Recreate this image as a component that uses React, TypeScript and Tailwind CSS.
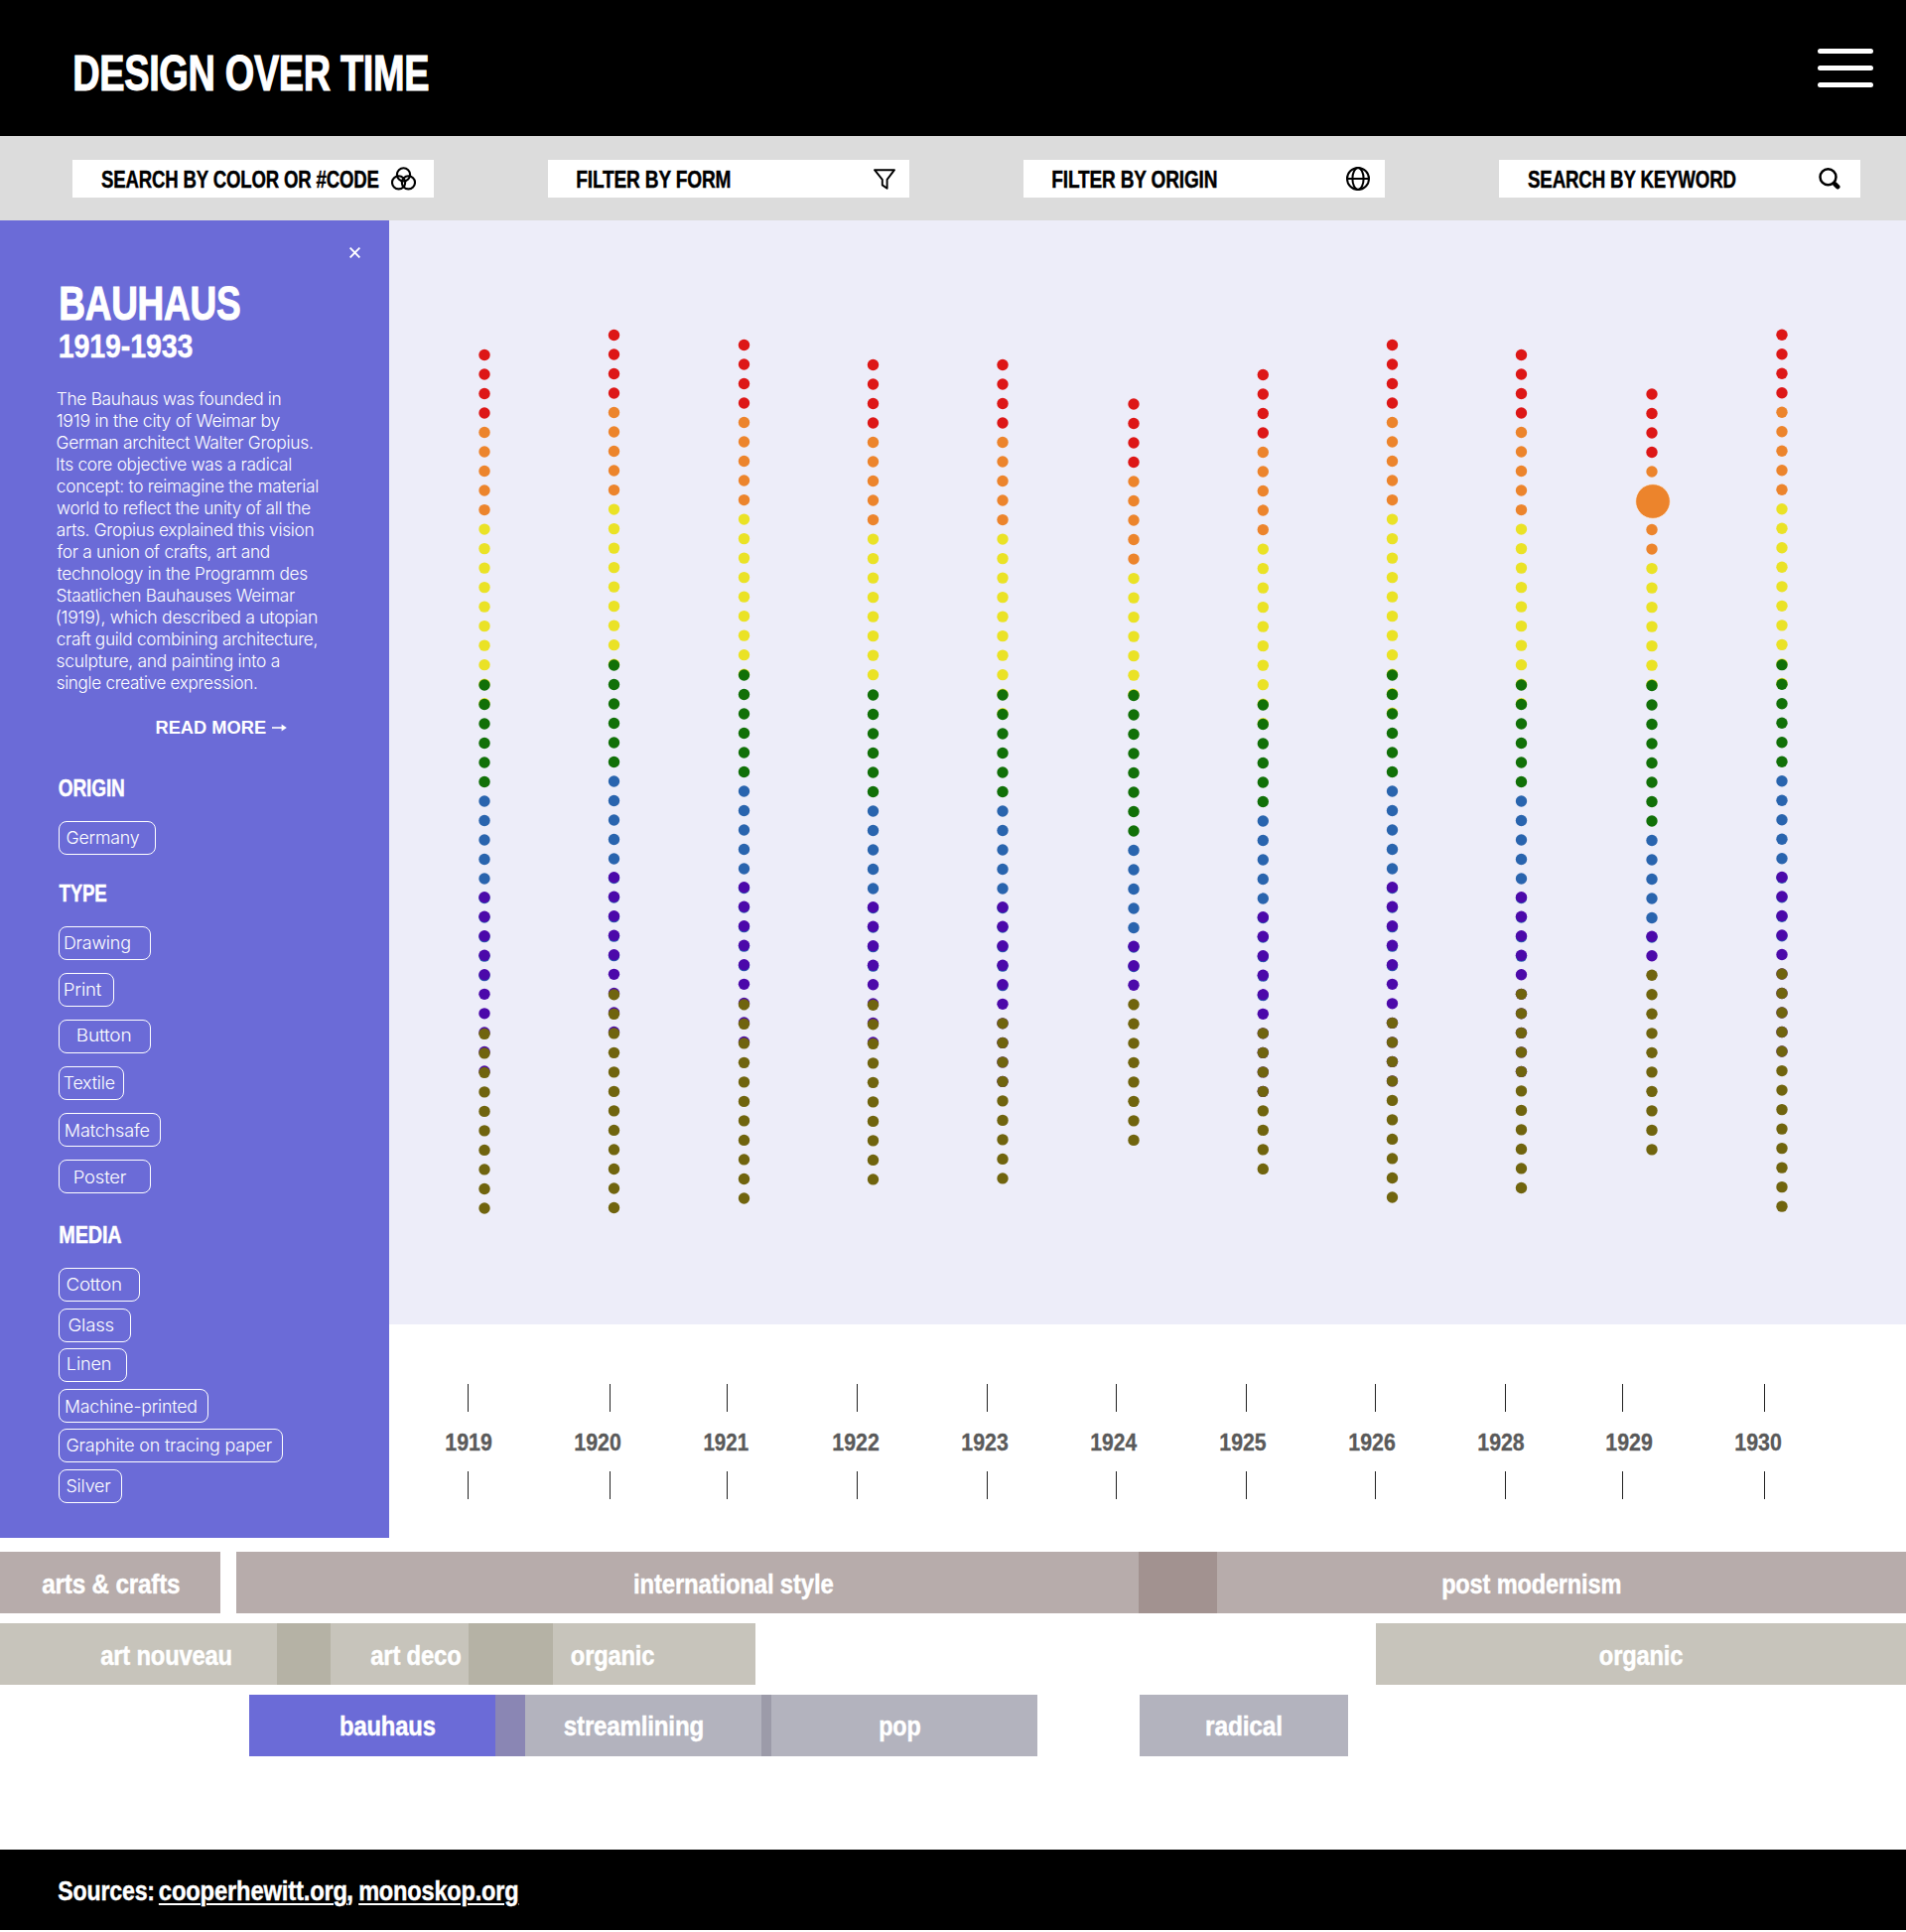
import { useLayoutEffect, useRef, useState } from "react";
import type { ReactNode } from "react";

/** Text condensed horizontally so that its glyphs span exactly `w` pixels. */
function Fit({ w, ml = 0, className = "", children }: { w: number; ml?: number; className?: string; children: string }) {
  const ref = useRef<HTMLSpanElement>(null);
  const [t, setT] = useState("none");
  useLayoutEffect(() => {
    const el = ref.current;
    const ctx = document.createElement("canvas").getContext("2d");
    if (!el || !ctx) return;
    const cs = getComputedStyle(el);
    // Measured at ten times the size, since canvas bounds are rounded to whole pixels.
    ctx.font = `${cs.fontWeight} ${parseFloat(cs.fontSize) * 10}px ${cs.fontFamily}`;
    const track = parseFloat(cs.letterSpacing) || 0;
    const m = ctx.measureText(children);
    const left = m.actualBoundingBoxLeft / 10;
    const ink = m.actualBoundingBoxRight / 10 + left + track * (children.length - 1);
    const s = w / ink;
    setT(`translateX(${left * s + 0.6}px) scaleX(${s})`);
  }, [w, children]);
  return (
    <span className="block shrink-0 whitespace-nowrap" style={{ width: w, marginLeft: ml }}>
      <span ref={ref} className={"inline-block origin-left " + className} style={{ transform: t }}>
        {children}
      </span>
    </span>
  );
}

const VennIcon = () => (
  <svg width="25" height="24" viewBox="0 0 25 24" fill="none" stroke="#000" strokeWidth="2.1">
    <circle cx="12.5" cy="7.8" r="6.6" />
    <circle cx="7.6" cy="15.8" r="6.6" />
    <circle cx="17.4" cy="15.8" r="6.6" />
  </svg>
);
const FunnelIcon = () => (
  <svg width="22" height="21" viewBox="0 0 22 21" fill="none" stroke="#000" strokeWidth="1.9" strokeLinejoin="round">
    <path d="M1 1.2h20l-7.4 9.6v9L8.8 16.4v-5.6z" />
  </svg>
);
const GlobeIcon = () => (
  <svg width="24" height="24" viewBox="0 0 24 24" fill="none" stroke="#000" strokeWidth="2">
    <circle cx="12" cy="12" r="11" />
    <ellipse cx="12" cy="12" rx="5.6" ry="11" />
    <path d="M1 12h22" />
  </svg>
);
const SearchIcon = () => (
  <svg width="22" height="22" viewBox="0 0 22 22" fill="none" stroke="#000">
    <circle cx="9.5" cy="9.3" r="8" strokeWidth="2.5" />
    <path d="M14.8 14.4l1.6 1.6" strokeWidth="3" />
    <path d="M16.4 16.4l2.8 2.8" strokeWidth="4.6" strokeLinecap="round" />
  </svg>
);

const filters: { label: string; w: number; icon: ReactNode; pr: string }[] = [
  { label: "SEARCH BY COLOR OR #CODE", w: 279, icon: <VennIcon />, pr: "pr-[18px]" },
  { label: "FILTER BY FORM", w: 154, icon: <FunnelIcon />, pr: "pr-[14px]" },
  { label: "FILTER BY ORIGIN", w: 165, icon: <GlobeIcon />, pr: "pr-[15px]" },
  { label: "SEARCH BY KEYWORD", w: 209, icon: <SearchIcon />, pr: "pr-[20px]" },
];

const paragraph: [string, number][] = [
  ["The Bauhaus was founded in", 225],
  ["1919 in the city of Weimar by", 224.5],
  ["German architect Walter Gropius.", 257],
  ["Its core objective was a radical", 235.5],
  ["concept: to reimagine the material", 262.5],
  ["world to reflect the unity of all the", 255],
  ["arts. Gropius explained this vision", 258],
  ["for a union of crafts, art and", 213.5],
  ["technology in the Programm des", 252],
  ["Staatlichen Bauhauses Weimar", 239.5],
  ["(1919), which described a utopian", 261.5],
  ["craft guild combining architecture,", 261.5],
  ["sculpture, and painting into a", 223.5],
  ["single creative expression.", 201],
];

type Tag = { label: string; box: number; x: number; w: number; pt: number; mt: number };
const origin: Tag[] = [{ label: "Germany", box: 98, x: 8.3, w: 72.5, pt: 6, mt: 0 }];
const types: Tag[] = [
  { label: "Drawing", box: 93, x: 5.5, w: 65, pt: 6, mt: 0 },
  { label: "Print", box: 56, x: 5.5, w: 36.5, pt: 6, mt: 13 },
  { label: "Button", box: 93, x: 18.5, w: 52.5, pt: 5, mt: 13 },
  { label: "Textile", box: 66, x: 5, w: 50.5, pt: 6, mt: 13 },
  { label: "Matchsafe", box: 103, x: 6.7, w: 83.5, pt: 7, mt: 13 },
  { label: "Poster", box: 93, x: 15.7, w: 51.5, pt: 7, mt: 13 },
];
const media: Tag[] = [
  { label: "Cotton", box: 82, x: 8.3, w: 54, pt: 6, mt: 0 },
  { label: "Glass", box: 73, x: 10.3, w: 44.7, pt: 6, mt: 7 },
  { label: "Linen", box: 69, x: 8.7, w: 42.3, pt: 5, mt: 6 },
  { label: "Machine-printed", box: 151, x: 6.7, w: 131, pt: 7, mt: 7 },
  { label: "Graphite on tracing paper", box: 226, x: 8.3, w: 206.3, pt: 6, mt: 6 },
  { label: "Silver", box: 64, x: 8.3, w: 43.7, pt: 6, mt: 7 },
];

function Tags({ items }: { items: Tag[] }) {
  return (
    <div className="flex flex-col font-['Inter',sans-serif] font-[360] tracking-[-0.2px]">
      {items.map((t) => (
        <div
          key={t.label}
          className="h-[34px] rounded-[8px] border border-white text-[17.8px] leading-[20px] text-white"
          style={{ width: t.box, marginTop: t.mt, paddingTop: t.pt }}
        >
          <Fit w={t.w} ml={t.x - 1}>{t.label}</Fit>
        </div>
      ))}
    </div>
  );
}

const RED = "#dd1717", ORANGE = "#ec842c", YELLOW = "#eae226", GREEN = "#117008";
const BLUE = "#2964ae", PURPLE = "#4c09aa", OLIVE = "#70640e";
const PALETTE = [RED, ORANGE, YELLOW, GREEN, BLUE, PURPLE, OLIVE];
const STEP = 19.51;

// x centre, y of the first dot, dots per colour, yellow dots under green, purple dots under olive, olive offset
const columns: { x: number; y: number; n: number[]; yg: number; po: number; dy: number }[] = [
  { x: 488, y: 357.5, n: [4, 5, 8, 6, 5, 7, 10], yg: 2, po: 3, dy: 1 },
  { x: 618.5, y: 337.5, n: [4, 5, 8, 6, 5, 6, 12], yg: 1, po: 3, dy: 1 },
  { x: 749.5, y: 347.5, n: [4, 5, 8, 6, 5, 6, 11], yg: 1, po: 3, dy: 1 },
  { x: 879.5, y: 367.5, n: [4, 5, 8, 6, 5, 5, 10], yg: 0, po: 3, dy: 1 },
  { x: 1010, y: 367.5, n: [4, 5, 8, 6, 5, 6, 9], yg: 2, po: 4, dy: 0 },
  { x: 1142, y: 407, n: [4, 5, 6, 8, 5, 3, 8], yg: 1, po: 0, dy: 0 },
  { x: 1272.3, y: 377.5, n: [4, 5, 8, 6, 5, 6, 8], yg: 2, po: 4, dy: 0 },
  { x: 1402.5, y: 347.5, n: [4, 5, 8, 6, 5, 7, 10], yg: 3, po: 4, dy: 0 },
  { x: 1532.5, y: 357.5, n: [4, 5, 8, 6, 5, 5, 11], yg: 2, po: 5, dy: 0 },
  { x: 1664, y: 397, n: [4, 5, 6, 8, 5, 2, 10], yg: 1, po: 0, dy: 0 },
  { x: 1795, y: 337.2, n: [4, 5, 8, 6, 5, 5, 13], yg: 2, po: 5, dy: 0 },
];
const HIGHLIGHT = 9;

function DotChart() {
  return (
    <svg width="1528" height="1112" viewBox="392 222 1528 1112" className="block">
      {columns.map((c, ci) => {
        const out: ReactNode[] = [];
        let i = 0;
        c.n.forEach((count, g) => {
          const off = g === 3 || g === 4 ? 0.8 : g === 6 ? c.dy : 0;
          const extra = g === 2 ? c.yg : g === 4 ? Math.min(5, c.n[5] - 1) : g === 5 ? c.po : 0;
          for (let k = 0; k < count + extra; k++) {
            if (ci === HIGHLIGHT && g === 1 && (k === 1 || k === 2)) continue;
            const under = g === 5 && k >= count && c.dy > 0 ? -0.4 : 0;
            out.push(
              <circle key={`${g}-${k}`} cx={c.x} cy={c.y + (i + k) * STEP + off + under} r={5.7} fill={PALETTE[g]} />,
            );
          }
          i += count;
        });
        return <g key={c.x}>{out}</g>;
      })}
      <circle cx="1665" cy="505" r="17.3" fill={ORANGE} stroke="#fbf3ef" strokeWidth="0.7" />
    </svg>
  );
}

const ticks = [471, 614, 732, 863, 994, 1124, 1255, 1385, 1516, 1634, 1777];
const years = ["1919", "1920", "1921", "1922", "1923", "1924", "1925", "1926", "1928", "1929", "1930"];

function Ticks() {
  return (
    <div className="flex h-7">
      {ticks.map((x, i) => (
        <div key={x} className="w-px shrink-0 bg-[#222]" style={{ marginLeft: i ? x - ticks[i - 1] - 1 : x - 392 }} />
      ))}
    </div>
  );
}

type Seg = { w: number; bg?: string; label?: string; x?: number; tw?: number };
function Lane({ segs, className }: { segs: Seg[]; className: string }) {
  return (
    <div className={"flex h-[62px] " + className}>
      {segs.map((s, i) => (
        <div key={i} className={"shrink-0 " + (s.bg ?? "")} style={{ width: s.w }}>
          {s.label && (
            <Fit w={s.tw!} ml={s.x!}>{s.label}</Fit>
          )}
        </div>
      ))}
    </div>
  );
}

export default function App() {
  return (
    <div className="flex h-[1946px] w-[1920px] flex-col overflow-hidden bg-white font-['Liberation_Sans',Arial,sans-serif]">
      <header className="flex h-[137px] items-start justify-between bg-black pr-[33px] pl-[74.7px] text-white">
        <h1 className="pt-[49px] text-[49.6px] leading-[50px] font-bold tracking-[-0.4px] [-webkit-text-stroke:1.1px]">
          <Fit w={356}>DESIGN OVER TIME</Fit>
        </h1>
        <div className="flex flex-col gap-3 pt-[49px]">
          <div className="h-[5px] w-[56px] rounded-full bg-white" />
          <div className="h-[5px] w-[56px] rounded-full bg-white" />
          <div className="h-[5px] w-[56px] rounded-full bg-white" />
        </div>
      </header>

      <nav className="flex h-[85px] items-start gap-[115px] bg-[#dcdcdc] pt-6 pl-[73px]">
        {filters.map((f) => (
          <div
            key={f.label}
            className={"flex h-[38px] w-[364px] items-center justify-between bg-white pl-[29px] text-[24.5px] leading-[39px] font-bold tracking-[-0.2px] text-black [-webkit-text-stroke:0.45px] " + f.pr}
          >
            <Fit w={f.w}>{f.label}</Fit>
            {f.icon}
          </div>
        ))}
      </nav>

      <main className="flex h-[1327px]">
        <aside className="w-[392px] bg-[#6b6bd7] text-white">
          <div className="flex justify-end pt-[27px] pr-[29px]">
            <svg width="11" height="11" viewBox="0 0 11 11" stroke="#fff" strokeWidth="1.9">
              <path d="M.6.6l9.8 9.8M10.4.6L.6 10.4" />
            </svg>
          </div>
          <h2 className="mt-[20px] pl-[61px] text-[49px] leading-[50px] font-bold tracking-[-0.3px] [-webkit-text-stroke:1.1px]">
            <Fit w={180}>BAUHAUS</Fit>
          </h2>
          <h3 className="mt-[3px] pl-[60px] text-[32.5px] leading-[32px] font-bold tracking-[-0.2px] [-webkit-text-stroke:0.4px]">
            <Fit w={133}>1919-1933</Fit>
          </h3>
          <div className="mt-[26px] pl-[56.7px] font-['Inter',sans-serif] text-[17.8px] leading-[22px] font-light tracking-[-0.3px]">
            {paragraph.map(([line, w]) => (
              <Fit key={line} w={w}>{line}</Fit>
            ))}
          </div>
          <div className="mt-[24px] flex items-center gap-[7px] pl-[157px] text-[17.7px] leading-[20px] font-bold">
            <Fit w={110}>READ MORE</Fit>
            <svg width="15" height="8" viewBox="0 0 15 8">
              <path d="M0 4h10" stroke="#fff" strokeWidth="1.6" />
              <path d="M9.6.4L14.8 4 9.6 7.6z" fill="#fff" />
            </svg>
          </div>
          <div className="pl-[59px]">
            <h4 className="mt-[39px] mb-[21px] text-[24.5px] leading-[24px] font-bold tracking-[-0.2px] [-webkit-text-stroke:0.45px]">
              <Fit w={65} ml={0.2}>ORIGIN</Fit>
            </h4>
            <Tags items={origin} />
            <h4 className="mt-[27px] mb-[21px] text-[24.5px] leading-[24px] font-bold tracking-[-0.2px] [-webkit-text-stroke:0.45px]">
              <Fit w={47.5}>TYPE</Fit>
            </h4>
            <Tags items={types} />
            <h4 className="mt-[30px] mb-[21px] text-[24.5px] leading-[24px] font-bold tracking-[-0.2px] [-webkit-text-stroke:0.45px]">
              <Fit w={61.5} ml={0.6}>MEDIA</Fit>
            </h4>
            <Tags items={media} />
          </div>
        </aside>

        <section className="w-[1528px]">
          <div className="h-[1112px] bg-[#ededf9]">
            <DotChart />
          </div>
          <div className="pt-[60px]">
            <Ticks />
            <div className="mt-[19px] mb-[17px] flex pl-[57px] text-[23.7px] leading-[24px] font-bold text-[#5a5a5a] [-webkit-text-stroke:0.3px]">
              {years.map((y) => (
                <div key={y} className="w-[129.95px] shrink-0">
                  <Fit w={y === "1921" ? 44 : 45.5}>{y}</Fit>
                </div>
              ))}
            </div>
            <Ticks />
          </div>
        </section>
      </main>

      <section className="mt-[14px] flex flex-col gap-[10px] text-[28.3px] font-bold tracking-[-0.2px] text-white [-webkit-text-stroke:0.45px]">
        <Lane
          className="leading-[64px]"
          segs={[
            { w: 222, bg: "bg-[#b7acab]", label: "arts & crafts", x: 41.6, tw: 138 },
            { w: 16 },
            { w: 909, bg: "bg-[#b7acab]", label: "international style", x: 401, tw: 199.5 },
            { w: 79, bg: "bg-[#a29290]" },
            { w: 694, bg: "bg-[#b7acab]", label: "post modernism", x: 226.5, tw: 178.4 },
          ]}
        />
        <Lane
          className="leading-[64px]"
          segs={[
            { w: 279, bg: "bg-[#c7c4bb]", label: "art nouveau", x: 101, tw: 131 },
            { w: 54, bg: "bg-[#b5b2a5]" },
            { w: 139, bg: "bg-[#c7c4bb]", label: "art deco", x: 39.6, tw: 90.3 },
            { w: 85, bg: "bg-[#b5b2a5]" },
            { w: 204, bg: "bg-[#c7c4bb]", label: "organic", x: 18.3, tw: 83.2 },
            { w: 625 },
            { w: 534, bg: "bg-[#c7c4bb]", label: "organic", x: 225, tw: 83.2 },
          ]}
        />
        <Lane
          className="leading-[62px]"
          segs={[
            { w: 251 },
            { w: 248, bg: "bg-[#6b6bd7]", label: "bauhaus", x: 92, tw: 94.3 },
            { w: 30, bg: "bg-[#8a86b4]" },
            { w: 238, bg: "bg-[#b3b3be]", label: "streamlining", x: 39.2, tw: 139 },
            { w: 10, bg: "bg-[#9c9ba9]" },
            { w: 268, bg: "bg-[#b3b3be]", label: "pop", x: 109.3, tw: 40.3 },
            { w: 103 },
            { w: 210, bg: "bg-[#b3b3be]", label: "radical", x: 67.2, tw: 75 },
          ]}
        />
      </section>

      <footer className="mt-[94px] flex h-[81px] bg-black pl-[57.5px] text-[28.5px] leading-[82px] font-bold tracking-[-0.2px] text-white [-webkit-text-stroke:0.45px]">
        <Fit w={95.5}>Sources:</Fit>
        <Fit w={188} ml={7} className="underline decoration-2 underline-offset-[3px]">cooperhewitt.org</Fit>
        <Fit w={4} ml={2}>,</Fit>
        <Fit w={158.5} ml={7.5} className="underline decoration-2 underline-offset-[3px]">monoskop.org</Fit>
      </footer>
    </div>
  );
}
